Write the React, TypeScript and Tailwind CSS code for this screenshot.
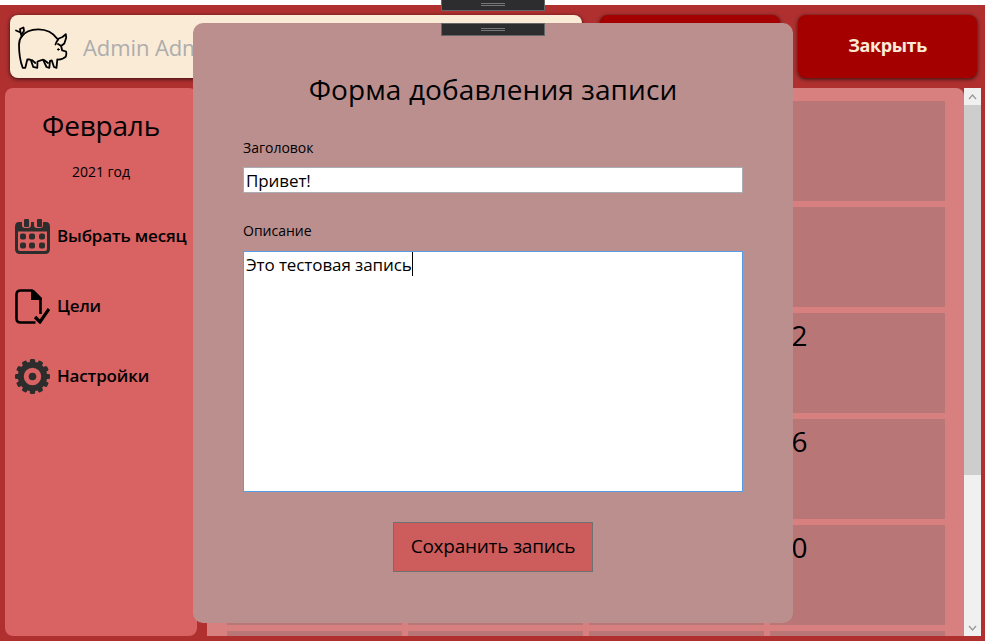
import type { ReactNode } from "react";

const days = Array.from({ length: 24 }, (_, i) => ({
  id: i + 1,
  label: [12, 16, 20].includes(i + 1) ? String(i + 1) : "",
}));
const gearTeeth = Array.from({ length: 12 }, (_, i) => i * 30);

function PigIcon() {
  return (
    <svg className="h-[46px] w-[54px] shrink-0" viewBox="0 0 54 46" fill="none" stroke="#000" strokeWidth="1.8" strokeLinejoin="round" strokeLinecap="round">
      <path d="M6.700 12.500C4.500 15 4 18 4 21c0 8 1.500 17 3.700 22.800h2.600L12.300 35.500h2.500c1.200 0 2 3 3.300 7.300l4.200 1 .2-6.300 5.500-1.800 3.500 7.300 2.800.8.700-7 1.800-.3 2.200 6.500 2.500.9.800-8.400c3.500.2 6.500-.7 8.500-2.800.6-1.400.7-3.700.3-5.200l-4-1.200-1-4.300 3.200-2.500 1.900-5.800-.4-3.500-3.300 2.800-3.700 1.500-2.300 3.500-1 2.500" />
      <path d="M6.700 12.500C10 7.500 16 5.300 23.300 5.300c8 0 14.700 3.200 19.200 9.700" />
      <path d="M6.700 12.500L5.500 8.500 1 6.500M5.500 8.500L5 5l3.500-1.500L9 7 7 9.500M16.800 36l3.500 3M29 36l4 3M45.500 21.500L43 20" />
      <path d="M43.300 24.500v1.800M42.500 25.500h2" strokeWidth="1" />
    </svg>
  );
}

function CalendarIcon() {
  return (
    <svg className="size-[35px] shrink-0" viewBox="0 0 35 35">
      <path fill="#2d2d2d" fillRule="evenodd" d="M0 8q0-5 4-5h3v3q0 3 3 3h3q3 0 3-3V3h3v3q0 3 3 3h3q3 0 3-3V3h3q4 0 4 5v22q0 5-5 5H5q-5 0-5-5zM3 12.500V30q0 2 2 2h25q2 0 2-2V12.500z" />
      <g fill="#2d2d2d">
        <rect x="9" width="5" height="8" rx="1" />
        <rect x="22" width="5" height="8" rx="1" />
        <rect x="5" y="14.500" width="6" height="6" rx="2" />
        <rect x="14" y="14.500" width="6" height="6" rx="2" />
        <rect x="24" y="14.500" width="6" height="6" rx="2" />
        <rect x="5" y="23.500" width="6" height="6" rx="2" />
        <rect x="14" y="23.500" width="6" height="6" rx="2" />
        <rect x="24" y="23.500" width="6" height="6" rx="2" />
      </g>
    </svg>
  );
}

function GoalsIcon() {
  return (
    <svg className="size-[35px] shrink-0" viewBox="0 0 35 35" fill="none" stroke="#000">
      <path strokeWidth="2.6" d="M20.500 33.500H5.500q-4 0-4-4v-24q0-4 4-4H17L25.500 11v14" />
      <path fill="#000" stroke="none" d="M16 1h3l8 8v2H16z" />
      <path strokeWidth="3.200" d="M20 28l5 5L34 20" />
    </svg>
  );
}

function GearIcon() {
  return (
    <svg className="size-[35px] shrink-0" viewBox="0 0 35 35" fill="#2d2d2d">
      {gearTeeth.map((a) => (
        <rect key={a} x="14.900" y="0" width="5.200" height="7" rx="1.300" transform={`rotate(${a} 17.5 17.5)`} />
      ))}
      <circle cx="17.500" cy="17.500" r="11.700" fill="none" stroke="#2d2d2d" strokeWidth="6" />
      <circle cx="17.500" cy="17.500" r="3.800" />
    </svg>
  );
}

function MenuItem({ icon, children }: { icon: ReactNode; children: ReactNode }) {
  return (
    <div className="flex h-[35px] items-center gap-[7px] whitespace-nowrap text-[17px] font-semibold leading-none tracking-[-0.16px]">
      {icon}
      <span className="pb-[2px]">{children}</span>
    </div>
  );
}

function DebugHandle({ className }: { className: string }) {
  return (
    <div className={`absolute left-[441px] flex w-[104px] flex-col items-center gap-px border border-[#666] bg-[#2d2d30] ${className}`}>
      <span className="h-px w-6 bg-[#777]" />
      <span className="h-px w-6 bg-[#777]" />
    </div>
  );
}

export default function App() {
  return (
    <div className="relative h-[641px] w-[985px] overflow-hidden bg-white pt-[5px] font-['Open_Sans','Noto_Sans',sans-serif] text-black">
      <div className="flex h-[636px] flex-col bg-[#b03030] pl-[5px] pr-1">
        <header className="flex h-[83px] pl-[5px] pt-[10px]">
          <div className="flex h-[63px] w-[572px] items-center rounded-lg bg-[#faebd7] pl-[5px] shadow-[0_1px_4px_0px_rgba(0,0,0,0.75)]">
            <PigIcon />
            <span className="ml-[14px] whitespace-nowrap pt-[2px] text-[22px] tracking-[-0.1px] text-[#adadad]">Admin Admin</span>
          </div>
          <div className="ml-[18px] h-[63px] w-[180px] rounded-lg bg-[#a50000] shadow-[0_1px_4px_0px_rgba(0,0,0,0.75)]" />
          <button className="ml-[18px] h-[63px] w-[179px] rounded-lg bg-[#a50000] pb-[3px] text-[18px] font-bold tracking-[-0.4px] text-[#faebd7] shadow-[0_1px_4px_0px_rgba(0,0,0,0.75)]">
            Закрыть
          </button>
        </header>
        <div className="flex h-[548px]">
          <aside className="flex w-48 flex-col rounded-lg bg-[#d96262] pl-[10px]">
            <h2 className="mt-[17px] w-[172px] text-center text-[28px] leading-[40px] tracking-[-0.2px]">Февраль</h2>
            <p className="mt-[17px] w-[172px] text-center text-[14px] leading-[20px]">2021 год</p>
            <nav className="mt-[37px] flex flex-col gap-[35px]">
              <MenuItem icon={<CalendarIcon />}>Выбрать месяц</MenuItem>
              <MenuItem icon={<GoalsIcon />}>Цели</MenuItem>
              <MenuItem icon={<GearIcon />}>Настройки</MenuItem>
            </nav>
          </aside>
          <main className="ml-[10px] h-[548px] w-[757px] overflow-hidden rounded-tl-lg rounded-tr-lg bg-[#d88080] pl-[19.5px] pt-[13px]">
            <div className="grid w-[718px] auto-rows-[100px] grid-cols-4 gap-[6px]">
              {days.map((d) => (
                <div key={d.id} className="bg-[#b97676] pl-[6px] pt-[2px] text-[28px] leading-[40px]">
                  {d.label}
                </div>
              ))}
            </div>
          </main>
          <div className="flex w-[17px] flex-col items-center bg-[#f0f0f0]">
            <svg className="h-[17px] w-[17px] shrink-0" viewBox="0 0 17 17" fill="none" stroke="#999" strokeWidth="1.300">
              <path d="M5 11l3.500-4L12 11" />
            </svg>
            <div className="h-[370px] w-full bg-[#cdcdcd]" />
            <div className="flex-1" />
            <svg className="h-[17px] w-[17px] shrink-0" viewBox="0 0 17 17" fill="none" stroke="#999" strokeWidth="1.300">
              <path d="M5 7l3.500 4L12 7" />
            </svg>
          </div>
        </div>
      </div>

      <section className="absolute left-[193px] top-[23px] flex h-[600px] w-[600px] flex-col rounded-[10px] bg-[#bc8f8f] px-[50px]">
        <h1 className="mt-[46px] whitespace-nowrap text-center text-[28px] leading-[40px] tracking-[0.1px]">Форма добавления записи</h1>
        <label className="mt-[29px] text-[14px] leading-[20px]">Заголовок</label>
        <div className="mt-[9px] h-[26px] border border-[#abadb3] bg-white pl-[2px] text-[17px] leading-[26px] tracking-[-0.1px]">Привет!</div>
        <label className="mt-[28px] text-[14px] leading-[20px]">Описание</label>
        <div className="mt-[10px] flex h-[241px] items-start border border-[#569de5] bg-white pl-[2px] text-[17px] leading-[26px] tracking-[-0.1px]">
          <span>Это тестовая запись</span>
          <span className="h-6 w-px bg-black" />
        </div>
        <button className="mt-[30px] h-[50px] w-[200px] self-center border border-[#707070] bg-[#cd5c5c] pb-[2px] text-[19px] tracking-[-0.25px]">Сохранить запись</button>
      </section>
      <DebugHandle className="top-0 h-[11px] border-t-0 pt-[3px]" />
      <DebugHandle className="top-[23px] h-[13px] pt-1" />
    </div>
  );
}
